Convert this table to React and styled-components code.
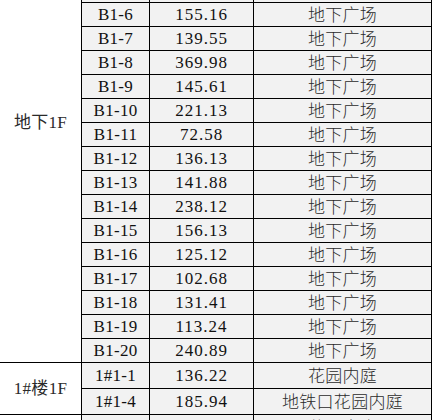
import React from "react";
import styled, { createGlobalStyle } from "styled-components";

const Global = createGlobalStyle`
  html, body { margin: 0; padding: 0; background: #ffffff; overflow: hidden; }
  body { width: 432px; height: 420px; }
`;

const Viewport = styled.div`
  width: 432px;
  height: 420px;
  overflow: hidden;
`;

const Table = styled.table`
  border-collapse: collapse;
  table-layout: fixed;
  width: 432px;
  margin-top: -118px;
  margin-left: -1px;
  font-family: "Liberation Serif", "Noto Sans CJK SC", serif;
  font-size: 17px;
  color: #111;
`;

const Row = styled.tr`
  height: ${(p) => p.$h || 24}px;
`;

const Cell = styled.td`
  border: 1px solid #000;
  padding: 0;
  height: ${(p) => (p.$h ? p.$h - 1 : 23)}px;
  box-sizing: border-box;
  text-align: center;
  vertical-align: middle;
  line-height: 20px;
  white-space: nowrap;
  overflow: hidden;
  font-family: "Liberation Serif", "Noto Sans CJK SC", serif;
  background: ${(p) => (p.$plain ? "#ffffff" : "#f2f2f2")};
  letter-spacing: ${(p) => (p.$num ? "1px" : "0.3px")};
`;

const Cjk = styled.span`
  font-family: "Noto Sans CJK SC", sans-serif;
  font-weight: 300;
  color: #2a2a2a;
`;

const Group = styled.span`
  font-family: "Liberation Serif", "Noto Sans CJK SC", serif;
  color: #2a2a2a;
`;

const groups = [
  {
    name: "地下1F",
    h: 24,
    rows: [
      ["B1-1", "126.35", "地下广场"],
      ["B1-2", "118.72", "地下广场"],
      ["B1-3", "132.46", "地下广场"],
      ["B1-4", "109.83", "地下广场"],
      ["B1-5", "114.15", "地下广场"],
      ["B1-6", "155.16", "地下广场"],
      ["B1-7", "139.55", "地下广场"],
      ["B1-8", "369.98", "地下广场"],
      ["B1-9", "145.61", "地下广场"],
      ["B1-10", "221.13", "地下广场"],
      ["B1-11", "72.58", "地下广场"],
      ["B1-12", "136.13", "地下广场"],
      ["B1-13", "141.88", "地下广场"],
      ["B1-14", "238.12", "地下广场"],
      ["B1-15", "156.13", "地下广场"],
      ["B1-16", "125.12", "地下广场"],
      ["B1-17", "102.68", "地下广场"],
      ["B1-18", "131.41", "地下广场"],
      ["B1-19", "113.24", "地下广场"],
      ["B1-20", "240.89", "地下广场"],
    ],
  },
  {
    name: "1#楼1F",
    h: 26,
    rows: [
      ["1#1-1", "136.22", "花园内庭"],
      ["1#1-4", "185.94", "地铁口花园内庭"],
    ],
  },
  {
    name: "2#楼1F",
    h: 26,
    rows: [
      ["2#1-1", "128.36", "花园内庭"],
      ["2#1-2", "97.45", "花园内庭"],
      ["2#1-3", "112.60", "花园内庭"],
    ],
  },
];

export default function App() {
  return (
    <Viewport>
      <Global />
      <Table>
        <colgroup>
          <col style={{ width: 82 }} />
          <col style={{ width: 68 }} />
          <col style={{ width: 104 }} />
          <col style={{ width: 178 }} />
        </colgroup>
        <tbody>
          {groups.map((g) =>
            g.rows.map(([id, area, use], i) => (
              <Row key={id} $h={g.h}>
                {i === 0 && (
                  <Cell $plain rowSpan={g.rows.length}>
                    <Group>{g.name}</Group>
                  </Cell>
                )}
                <Cell $h={g.h}>{id}</Cell>
                <Cell $h={g.h} $num>{area}</Cell>
                <Cell $h={g.h}>
                  <Cjk>{use}</Cjk>
                </Cell>
              </Row>
            ))
          )}
        </tbody>
      </Table>
    </Viewport>
  );
}
